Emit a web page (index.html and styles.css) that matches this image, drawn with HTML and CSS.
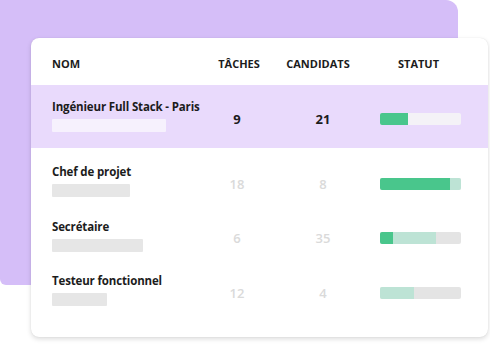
FILE: index.html
```html
<!DOCTYPE html>
<html lang="fr">
<head>
<meta charset="utf-8">
<title>Offres</title>
<link rel="stylesheet" href="styles.css">
</head>
<body>
<div class="panel">
  <div class="card">
    <div class="row head">
      <div class="c-name">NOM</div>
      <div class="c-num">TÂCHES</div>
      <div class="c-num c-cand">CANDIDATS</div>
      <div class="c-stat">STATUT</div>
    </div>
    <div class="row item active">
      <div class="c-name">
        <div class="title">Ingénieur Full Stack - Paris</div>
        <div class="ph" style="width:114px"></div>
      </div>
      <div class="c-num val">9</div>
      <div class="c-num c-cand val">21</div>
      <div class="c-stat val-bar">
        <div class="bar"><span class="g" style="width:28px"></span></div>
      </div>
    </div>
    <div class="body">
      <div class="row item">
        <div class="c-name">
          <div class="title">Chef de projet</div>
          <div class="ph" style="width:78px"></div>
        </div>
        <div class="c-num val dim">18</div>
        <div class="c-num c-cand val dim">8</div>
        <div class="c-stat val-bar">
          <div class="bar"><span class="g" style="width:70px"></span><span class="l" style="width:11px"></span></div>
        </div>
      </div>
      <div class="row item">
        <div class="c-name">
          <div class="title">Secrétaire</div>
          <div class="ph" style="width:91px"></div>
        </div>
        <div class="c-num val dim">6</div>
        <div class="c-num c-cand val dim">35</div>
        <div class="c-stat val-bar">
          <div class="bar"><span class="g" style="width:13px"></span><span class="l" style="width:43px"></span></div>
        </div>
      </div>
      <div class="row item">
        <div class="c-name">
          <div class="title">Testeur fonctionnel</div>
          <div class="ph" style="width:55px"></div>
        </div>
        <div class="c-num val dim">12</div>
        <div class="c-num c-cand val dim">4</div>
        <div class="c-stat val-bar">
          <div class="bar"><span class="l" style="width:34px"></span></div>
        </div>
      </div>
    </div>
  </div>
</div>
</body>
</html>
```
FILE: styles.css
```css
* { box-sizing: border-box; }
html, body { margin: 0; padding: 0; background: #ffffff; }
body {
  font-family: "Open Sans", "Noto Sans", sans-serif;
  color: #1c1c1c;
  width: 490px;
  height: 344px;
  overflow: hidden;
}
.panel {
  width: 458px;
  height: 285px;
  background: #d5bef8;
  border-radius: 0 12px 0 6px;
  padding: 38px 0 0 31px;
}
.card {
  width: 457px;
  height: 299px;
  background: #ffffff;
  border-radius: 8px;
  box-shadow: 0 2px 5px rgba(0, 0, 0, 0.14), 0 0 1px rgba(0, 0, 0, 0.12);
  overflow: hidden;
}
.row {
  display: grid;
  grid-template-columns: 150px 70px 98px 91px;
  padding-left: 21px;
}
.head {
  padding-top: 18px;
  padding-bottom: 13px;
  font-size: 11px;
  font-weight: 700;
  line-height: 16px;
}
.head .c-num { text-align: center; padding-left: 4px; }
.head .c-cand { padding-left: 0; padding-right: 6px; }
.head .c-stat { text-align: center; padding-left: 6px; }
.item { align-items: center; }
.active {
  background: #e9dafc;
  padding-top: 14px;
  padding-bottom: 16px;
}
.body { padding-top: 6px; }
.body .item { padding-top: 10px; padding-bottom: 11px; height: 54.5px; }
.title {
  font-size: 11.5px;
  font-weight: 700;
  line-height: 16px;
  letter-spacing: -0.15px;
  white-space: nowrap;
}
.ph {
  height: 13px;
  margin-top: 4px;
  background: #e6e6e6;
  border-radius: 1px;
}
.active .ph { background: #f6f1fd; }
.val {
  text-align: center;
  font-size: 13px;
  font-weight: 700;
  line-height: 16px;
  margin-top: 6px;
}
.c-cand.val { padding-left: 4px; }
.dim { color: #dadada; font-weight: 600; }
.val-bar { padding-left: 10px; margin-top: 6px; }
.bar {
  display: flex;
  width: 81px;
  height: 12px;
  background: #e4e4e4;
  border-radius: 2px;
  overflow: hidden;
}
.active .bar { background: #f4f2f7; }
.bar .g { background: #49c68c; }
.bar .l { background: #bde3d5; }
```
